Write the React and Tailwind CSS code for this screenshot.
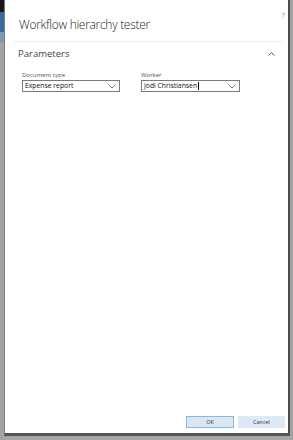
import React from "react";

function ChevronDown() {
  return (
    <svg width="8" height="5" viewBox="0 0 8 5" fill="none">
      <path d="M0.5 0.5 L4 4 L7.5 0.5" stroke="#555" strokeWidth="0.8" />
    </svg>
  );
}

function ChevronUp() {
  return (
    <svg width="7" height="4" viewBox="0 0 7 4" fill="none">
      <path d="M0.5 3.5 L3.5 0.7 L6.5 3.5" stroke="#444" strokeWidth="0.9" />
    </svg>
  );
}

export default function App() {
  const font = { fontFamily: '"Open Sans", "Noto Sans", sans-serif' };
  return (
    <div className="flex w-[293px] h-[440px] bg-[#a6a6a6] overflow-hidden" style={font}>
      <div className="flex flex-col w-[4px] shrink-0">
        <div className="h-[12px] bg-[#161616]" />
        <div className="h-[20px] bg-[#3d6b94]" />
        <div className="h-[10px] bg-[#8098ad]" />
        <div className="flex-1 bg-[#a3a3a3]" />
      </div>
      <div className="flex flex-col w-[286px] h-[436px] shrink-0 bg-white border-l border-l-[#7a7a7a] border-r-2 border-r-[#4d4d4d] border-b-[3px] border-b-[#555555]">
        <div className="flex justify-between pl-[14px] pr-[3px] h-[41px]">
          <div className="pt-[18px] text-[12px] leading-[14px] tracking-[-0.3px] font-light text-[#222]">Workflow hierarchy tester</div>
          <div className="pt-[10px] text-[8px] leading-[9px] text-[#999]">?</div>
        </div>
        <div className="ml-[9px] w-[268px] h-px bg-[#ececec]" />
        <div className="flex items-center justify-between pl-[13px] pr-[13px] pt-[6px] h-[17px]">
          <div className="text-[9.5px] leading-[11px] text-[#444]">Parameters</div>
          <ChevronUp />
        </div>
        <div className="flex gap-[21px] pl-[17px] pt-[13px]">
          <div className="flex flex-col w-[98px]">
            <div className="text-[6px] leading-[7px] text-[#555] pb-[1px]">Document type</div>
            <div className="flex items-center justify-between h-[12px] border border-[#7a7a7a] pl-[2px] pr-[3px]">
              <span className="text-[6.8px] leading-[8px] text-[#111]">Expense report</span>
              <ChevronDown />
            </div>
          </div>
          <div className="flex flex-col w-[99px]">
            <div className="text-[6px] leading-[7px] text-[#555] pb-[1px]">Worker</div>
            <div className="flex items-center justify-between h-[12px] border border-[#7a7a7a] pl-[2px] pr-[3px]">
              <span className="flex items-center text-[6.8px] leading-[8px] text-[#111]">
                Jodi Christiansen
                <span className="inline-block w-px h-[8px] bg-[#111] ml-px" />
              </span>
              <ChevronDown />
            </div>
          </div>
        </div>
        <div className="flex-1" />
        <div className="flex justify-end gap-[4px] pr-[3px] pb-[5px]">
          <div className="flex items-center justify-center w-[48px] h-[12px] bg-[#d9e7f5] border border-[#8fb8e0] text-[5.5px] text-[#333]">OK</div>
          <div className="flex items-center justify-center w-[47px] h-[12px] bg-[#dde9f5] text-[5.5px] text-[#333]">Cancel</div>
        </div>
      </div>
      <div className="flex-1 bg-[#a3a3a3]" />
    </div>
  );
}
